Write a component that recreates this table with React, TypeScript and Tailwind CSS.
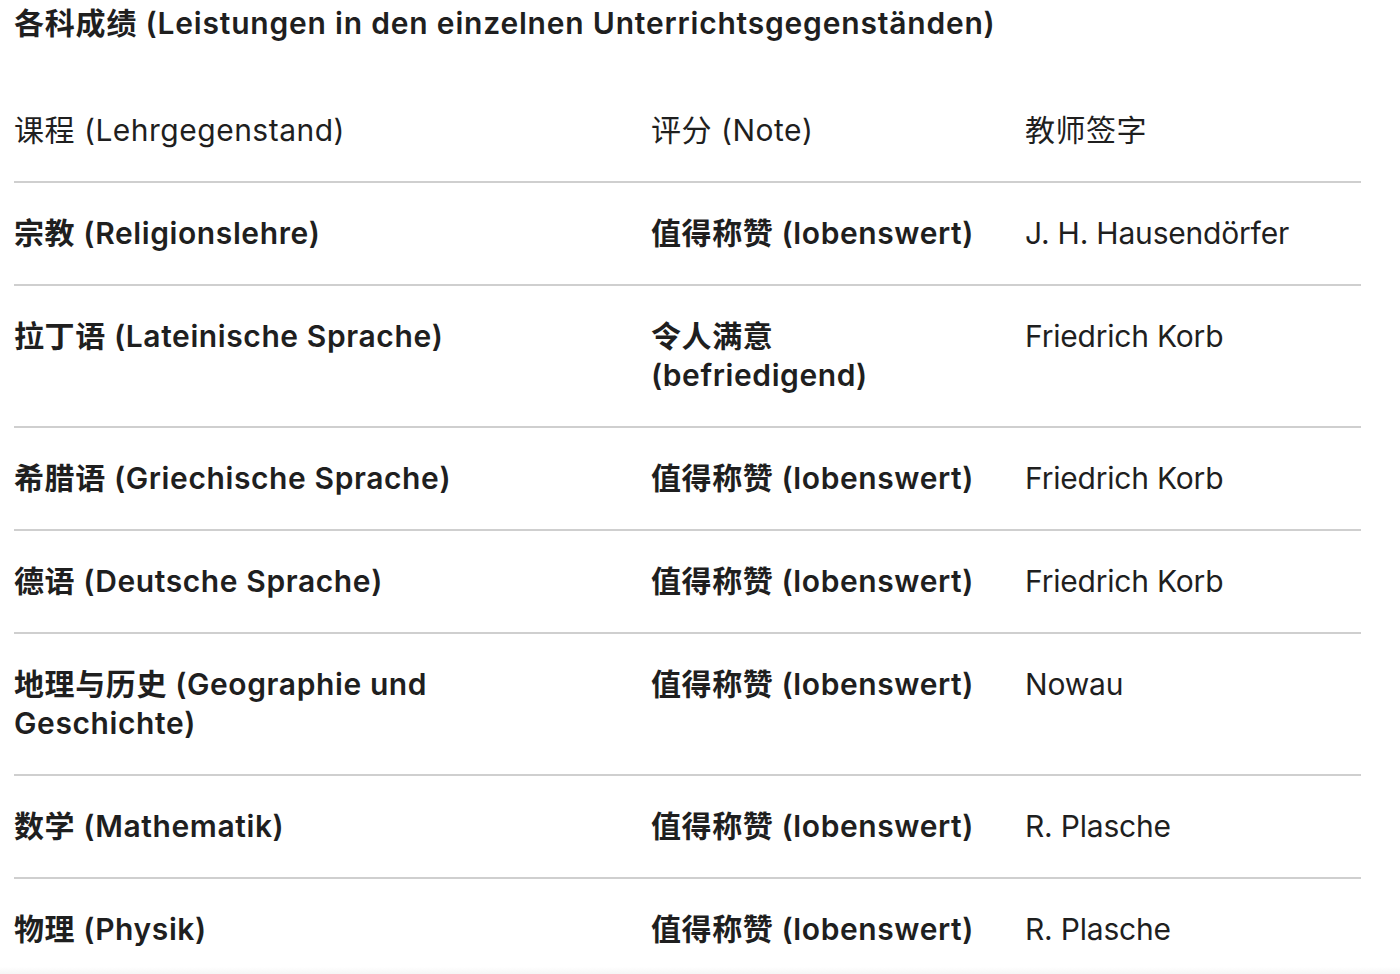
import React from "react";

const rows: [string, string, string][] = [
  ["宗教 (Religionslehre)", "值得称赞 (lobenswert)", "J. H. Hausendörfer"],
  ["拉丁语 (Lateinische Sprache)", "令人满意 (befriedigend)", "Friedrich Korb"],
  ["希腊语 (Griechische Sprache)", "值得称赞 (lobenswert)", "Friedrich Korb"],
  ["德语 (Deutsche Sprache)", "值得称赞 (lobenswert)", "Friedrich Korb"],
  ["地理与历史 (Geographie und Geschichte)", "值得称赞 (lobenswert)", "Nowau"],
  ["数学 (Mathematik)", "值得称赞 (lobenswert)", "R. Plasche"],
  ["物理 (Physik)", "值得称赞 (lobenswert)", "R. Plasche"],
];

export default function App() {
  return (
    <div
      className="relative h-[974px] overflow-hidden bg-white px-[14px] text-[#1f1f1f]"
      style={{ fontFamily: "Inter, 'Noto Sans CJK SC', sans-serif" }}
    >
      <h2 className="pt-[4px] text-[30px] leading-[39px] font-semibold tracking-[0.8px] mb-[37px]">
        各科成绩 (Leistungen in den einzelnen Unterrichtsgegenständen)
      </h2>
      <div className="w-[1347px]">
        <div className="grid grid-cols-[637px_374px_336px] border-b-2 border-[#cfcfcf] text-[30px] leading-[39px] tracking-[0.5px]">
          <div className="py-[31px] pr-[16px]">课程 (Lehrgegenstand)</div>
          <div className="py-[31px] pr-[16px]">评分 (Note)</div>
          <div className="py-[31px] pr-[16px]">教师签字</div>
        </div>
        {rows.map((r, i) => (
          <div
            key={i}
            className="grid grid-cols-[637px_374px_336px] border-b-2 border-[#cfcfcf] text-[30px] leading-[39px]"
          >
            <div className="py-[31px] pr-[160px] font-semibold tracking-[0.6px]">{r[0]}</div>
            <div className="py-[31px] pr-[30px] font-semibold tracking-[0.6px]">{r[1]}</div>
            <div className="py-[31px] pr-[16px] tracking-[-0.2px]">{r[2]}</div>
          </div>
        ))}
      </div>
      <div className="pointer-events-none absolute inset-x-0 bottom-0 h-[7px] bg-gradient-to-b from-white to-[#f5f5f5]" />
    </div>
  );
}
